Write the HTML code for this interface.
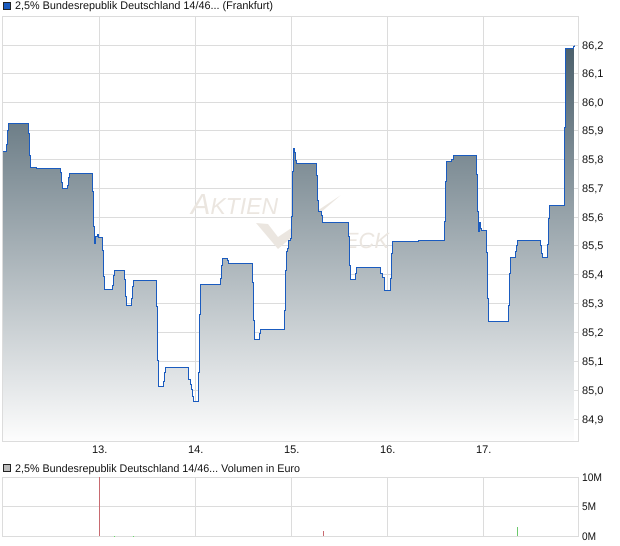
<!DOCTYPE html>
<html>
<head>
<meta charset="utf-8">
<style>
html,body{margin:0;padding:0;background:#fff;width:620px;height:546px;overflow:hidden}
svg{display:block;position:absolute;left:0;top:0}
text{font-family:"Liberation Sans",sans-serif;font-size:11px;fill:#111;text-rendering:geometricPrecision}
</style>
</head>
<body>
<svg width="620" height="546" viewBox="0 0 620 546" xmlns="http://www.w3.org/2000/svg">
<defs>
<linearGradient id="g" gradientUnits="userSpaceOnUse" x1="0" y1="45" x2="0" y2="441">
<stop offset="0" stop-color="#4a5f6b"/>
<stop offset="1" stop-color="#fdfdfd"/>
</linearGradient>
</defs>

<!-- legend 1 -->
<rect x="3.5" y="2.5" width="7" height="7" fill="#1a5bbf" stroke="#222" shape-rendering="crispEdges"/>
<text x="15" y="9" textLength="258" lengthAdjust="spacingAndGlyphs">2,5% Bundesrepublik Deutschland 14/46... (Frankfurt)</text>

<!-- main grid -->
<g stroke="#dcdcdc" stroke-width="1" shape-rendering="crispEdges" fill="none">
<path d="M2 16.5H579M2 45.5H578M2 73.5H578M2 102.5H578M2 130.5H578M2 159.5H578M2 188.5H578M2 217.5H578M2 245.5H578M2 274.5H578M2 303.5H578M2 332.5H578M2 361.5H578M2 390.5H578M2 419.5H578M2 441.5H579"/>
<path d="M2.5 16V442M99.5 16V442M195.5 16V442M291.5 16V442M387.5 16V442M483.5 16V442M578.5 16V442"/>
</g>

<!-- watermark -->
<g fill="#ebe6e0">
<text x="191" y="214" font-style="italic" style="font-size:29px;fill:#ebe6e0">A<tspan style="font-size:23px">KTIEN</tspan></text>
<text x="312" y="248" font-style="italic" style="font-size:22px;fill:#ebe6e0">CHECK</text>
<polygon points="256,223 268,224 278,237 341,195 278,249"/>
</g>

<!-- fill -->
<path fill="url(#g)" d="M3 151.5H6.5V144.5H7.5V130.5H8.5V123.5H28.5V133.5H29.5V155.5H30.5V167.5H36.5V168.5H60.5V172.5H61.5V182.5H62.5V188.5H67.5V185.5H68.5V177.5H69.5V173.5H92.5V191.5H93.5V226.5H94.5V243.5H95.5V236.5H97.5V234.5H98.5V237.5H102.5V250.5H103.5V276.5H104.5V289.5H112.5V285.5H113.5V275.5H114.5V270.5H124.5V279.5H125.5V296.5H126.5V305.5H131.5V298.5H132.5V286.5H133.5V280.5H156.5V306.5H157.5V360.5H158.5V386.5H163.5V381.5H164.5V372.5H165.5V367.5H188.5V379.5H190.5V384.5H191.5V389.5H192.5V396.5H193.5V401.5H198.5V372.5H199.5V314.5H200.5V284.5H220.5V278.5H221.5V265.5H222.5V258.5H227.5V260.5H228.5V263.5H252.5V282.5H253.5V320.5H254.5V339.5H259.5V333.5H260.5V329.5H284.5V310.5H285.5V270.5H286.5V251.5H287.5V248.5H288.5V240.5H290.5V238.5H291.5V216.5H292.5V171.5H293.5V148.5H294.5V152.5H295.5V160.5H296.5V163.5H316.5V175.5H317.5V200.5H318.5V211.5H321.5V215.5H322.5V222.5H348.5V236.5H349.5V265.5H350.5V279.5H355.5V273.5H356.5V267.5H380.5V273.5H382.5V277.5H384.5V290.5H390.5V278.5H391.5V253.5H392.5V241.5H418.5V240.5H444.5V221.5H445.5V181.5H446.5V161.5H451.5V159.5H453.5V155.5H476.5V174.5H477.5V211.5H478.5V231.5H479.5V222.5H480.5V228.5H481.5V230.5H486.5V252.5H487.5V298.5H488.5V321.5H508.5V305.5H509.5V273.5H510.5V257.5H515.5V251.5H516.5V245.5H517.5V240.5H540.5V245.5H541.5V253.5H542.5V257.5H547.5V244.5H548.5V218.5H549.5V205.5H564.5V127.5H565.5V48.5H573.5V46.5H574V441H3Z"/>

<!-- line -->
<path fill="none" stroke="#1a5bbf" stroke-width="1" shape-rendering="crispEdges" d="M3 151.5H6.5V144.5H7.5V130.5H8.5V123.5H28.5V133.5H29.5V155.5H30.5V167.5H36.5V168.5H60.5V172.5H61.5V182.5H62.5V188.5H67.5V185.5H68.5V177.5H69.5V173.5H92.5V191.5H93.5V226.5H94.5V243.5H95.5V236.5H97.5V234.5H98.5V237.5H102.5V250.5H103.5V276.5H104.5V289.5H112.5V285.5H113.5V275.5H114.5V270.5H124.5V279.5H125.5V296.5H126.5V305.5H131.5V298.5H132.5V286.5H133.5V280.5H156.5V306.5H157.5V360.5H158.5V386.5H163.5V381.5H164.5V372.5H165.5V367.5H188.5V379.5H190.5V384.5H191.5V389.5H192.5V396.5H193.5V401.5H198.5V372.5H199.5V314.5H200.5V284.5H220.5V278.5H221.5V265.5H222.5V258.5H227.5V260.5H228.5V263.5H252.5V282.5H253.5V320.5H254.5V339.5H259.5V333.5H260.5V329.5H284.5V310.5H285.5V270.5H286.5V251.5H287.5V248.5H288.5V240.5H290.5V238.5H291.5V216.5H292.5V171.5H293.5V148.5H294.5V152.5H295.5V160.5H296.5V163.5H316.5V175.5H317.5V200.5H318.5V211.5H321.5V215.5H322.5V222.5H348.5V236.5H349.5V265.5H350.5V279.5H355.5V273.5H356.5V267.5H380.5V273.5H382.5V277.5H384.5V290.5H390.5V278.5H391.5V253.5H392.5V241.5H418.5V240.5H444.5V221.5H445.5V181.5H446.5V161.5H451.5V159.5H453.5V155.5H476.5V174.5H477.5V211.5H478.5V231.5H479.5V222.5H480.5V228.5H481.5V230.5H486.5V252.5H487.5V298.5H488.5V321.5H508.5V305.5H509.5V273.5H510.5V257.5H515.5V251.5H516.5V245.5H517.5V240.5H540.5V245.5H541.5V253.5H542.5V257.5H547.5V244.5H548.5V218.5H549.5V205.5H564.5V127.5H565.5V48.5H573.5V46.5H574.5V45.5"/>

<!-- y labels -->
<g>
<text x="582" y="49">86,2</text>
<text x="582" y="77">86,1</text>
<text x="582" y="106">86,0</text>
<text x="582" y="134">85,9</text>
<text x="582" y="163">85,8</text>
<text x="582" y="192">85,7</text>
<text x="582" y="221">85,6</text>
<text x="582" y="249">85,5</text>
<text x="582" y="278">85,4</text>
<text x="582" y="307">85,3</text>
<text x="582" y="336">85,2</text>
<text x="582" y="365">85,1</text>
<text x="582" y="394">85,0</text>
<text x="582" y="423">84,9</text>
</g>

<!-- x labels -->
<g>
<text x="92" y="453">13.</text>
<text x="188" y="453">14.</text>
<text x="284" y="453">15.</text>
<text x="380" y="453">16.</text>
<text x="476" y="453">17.</text>
</g>

<!-- legend 2 -->
<rect x="3.5" y="464.5" width="7" height="7" fill="#bdbdbd" stroke="#222" shape-rendering="crispEdges"/>
<text x="15" y="472" textLength="285" lengthAdjust="spacingAndGlyphs">2,5% Bundesrepublik Deutschland 14/46... Volumen in Euro</text>

<!-- volume grid -->
<g stroke="#dcdcdc" stroke-width="1" shape-rendering="crispEdges" fill="none">
<path d="M2 477.5H579M2 506.5H578M2 536.5H579"/>
<path d="M2.5 477V537M99.5 477V537M195.5 477V537M291.5 477V537M387.5 477V537M483.5 477V537M578.5 477V537"/>
</g>
<g stroke-width="1" shape-rendering="crispEdges" fill="none">
<path d="M99.5 477V536" stroke="#c86a70"/>
<path d="M323.5 531V536" stroke="#c86a70"/>
<path d="M517.5 527V536" stroke="#6cc96c"/>
<path d="M114.5 536V537M133.5 536V537" stroke="#66dd66"/>
</g>
<text x="582" y="481" textLength="20" lengthAdjust="spacingAndGlyphs">10M</text>
<text x="582" y="510" textLength="14" lengthAdjust="spacingAndGlyphs">5M</text>
<text x="582" y="540" textLength="14" lengthAdjust="spacingAndGlyphs">0M</text>
</svg>
</body>
</html>
